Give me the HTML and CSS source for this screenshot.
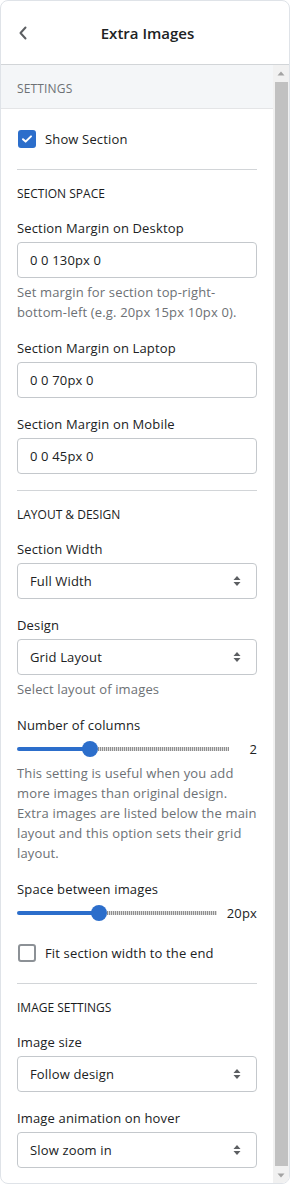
FILE: index.html
```html
<!DOCTYPE html>
<html lang="en">
<head>
    <meta charset="utf-8">
    <title>Extra Images</title>
    <link rel="stylesheet" href="styles.css">
</head>
<body>

<div class="panel">

    <div class="header">
        <a class="back" href="#">
            <svg width="10" height="14" viewBox="0 0 10 14"><path d="M7.5 1.5 L2.5 7 L7.5 12.5" fill="none" stroke="#5c5f62" stroke-width="2" stroke-linecap="round" stroke-linejoin="round"/></svg>
        </a>
        <h1 class="title">Extra Images</h1>
    </div>

    <div class="main">
        <div class="scroll">

            <div class="band">Settings</div>

            <div class="section">
                <label class="check">
                    <span class="box on">
                        <svg width="12" height="10" viewBox="0 0 12 10"><path d="M2 5.2 L4.6 7.6 L10 2.4" fill="none" stroke="#fff" stroke-width="2" stroke-linecap="round" stroke-linejoin="round"/></svg>
                    </span>
                    Show Section
                </label>
            </div>

            <div class="section">
                <h3 class="heading">Section space</h3>

                <div class="field">
                    <div class="label">Section Margin on Desktop</div>
                    <div class="input">0 0 130px 0</div>
                    <div class="help">Set margin for section top-right-bottom-left (e.g. 20px 15px 10px 0).</div>
                </div>

                <div class="field">
                    <div class="label">Section Margin on Laptop</div>
                    <div class="input">0 0 70px 0</div>
                </div>

                <div class="field">
                    <div class="label">Section Margin on Mobile</div>
                    <div class="input">0 0 45px 0</div>
                </div>
            </div>

            <div class="section">
                <h3 class="heading">Layout &amp; Design</h3>

                <div class="field">
                    <div class="label">Section Width</div>
                    <div class="input select">Full Width <svg width="8" height="12" viewBox="0 0 8 12"><path d="M4 1 L7.5 5 H0.5 Z M4 11 L7.5 7 H0.5 Z" fill="#5c5f62"/></svg></div>
                </div>

                <div class="field">
                    <div class="label">Design</div>
                    <div class="input select">Grid Layout <svg width="8" height="12" viewBox="0 0 8 12"><path d="M4 1 L7.5 5 H0.5 Z M4 11 L7.5 7 H0.5 Z" fill="#5c5f62"/></svg></div>
                    <div class="help">Select layout of images</div>
                </div>

                <div class="field">
                    <div class="label">Number of columns</div>
                    <div class="range">
                        <div class="track">
                            <div class="fill" style="--p: 0.3333"></div>
                            <div class="knob"></div>
                            <div class="rest"></div>
                        </div>
                        <div class="value">2</div>
                    </div>
                    <div class="help">This setting is useful when you add more images than original design. Extra images are listed below the main layout and this option sets their grid layout.</div>
                </div>

                <div class="field">
                    <div class="label">Space between images</div>
                    <div class="range">
                        <div class="track">
                            <div class="fill" style="--p: 0.4"></div>
                            <div class="knob"></div>
                            <div class="rest"></div>
                        </div>
                        <div class="value">20px</div>
                    </div>
                </div>

                <div class="field">
                    <label class="check">
                        <span class="box"></span>
                        Fit section width to the end
                    </label>
                </div>
            </div>

            <div class="section last">
                <h3 class="heading">Image settings</h3>

                <div class="field">
                    <div class="label">Image size</div>
                    <div class="input select">Follow design <svg width="8" height="12" viewBox="0 0 8 12"><path d="M4 1 L7.5 5 H0.5 Z M4 11 L7.5 7 H0.5 Z" fill="#5c5f62"/></svg></div>
                </div>

                <div class="field">
                    <div class="label">Image animation on hover</div>
                    <div class="input select">Slow zoom in <svg width="8" height="12" viewBox="0 0 8 12"><path d="M4 1 L7.5 5 H0.5 Z M4 11 L7.5 7 H0.5 Z" fill="#5c5f62"/></svg></div>
                </div>
            </div>

        </div>

        <div class="scrollbar">
            <div class="arrow">
                <svg width="8" height="5" viewBox="0 0 8 5"><path d="M4 0.5 L7.5 4.5 H0.5 Z" fill="#a3a3a3"/></svg>
            </div>
            <div class="thumb"></div>
            <div class="arrow">
                <svg width="8" height="5" viewBox="0 0 8 5"><path d="M4 4.5 L7.5 0.5 H0.5 Z" fill="#a3a3a3"/></svg>
            </div>
        </div>
    </div>

</div>

</body>
</html>
```

FILE: styles.css
```css
* {
    margin: 0;
    padding: 0;
    box-sizing: border-box;
}

body {
    font-family: "Open Sans", "Noto Sans", sans-serif;
    font-size: 13px;
    line-height: 20px;
    letter-spacing: 0.15px;
    color: #202223;
    background: #ffffff;
}

.panel {
    width: 290px;
    height: 1184px;
    border: 1px solid #dfe3e8;
    border-radius: 8px;
    overflow: hidden;
    display: flex;
    flex-direction: column;
    background: #ffffff;
}

.header {
    height: 64px;
    flex: none;
    display: flex;
    align-items: center;
    border-bottom: 1px solid #d2d5d8;
    padding: 0 16px;
}

.back {
    width: 20px;
    height: 20px;
    display: flex;
    align-items: center;
    justify-content: flex-start;
    margin-left: 1px;
}

.title {
    flex: 1;
    text-align: center;
    font-size: 15px;
    font-weight: 600;
    letter-spacing: 0;
    margin-right: 16px;
}

.main {
    flex: 1;
    display: flex;
    min-height: 0;
}

.scroll {
    flex: 1;
    overflow: hidden;
}

.band {
    height: 44px;
    display: flex;
    align-items: center;
    padding: 5px 16px 0;
    background: #f4f6f8;
    border-bottom: 1px solid #e4e5e7;
    font-size: 12px;
    text-transform: uppercase;
    color: #6d7175;
}

.section {
    margin: 0 16px;
    padding: 16px 0;
    border-bottom: 1px solid #d2d5d8;
}

.section.last {
    border-bottom: none;
}

.heading {
    font-size: 12px;
    line-height: 16px;
    font-weight: 400;
    letter-spacing: 0;
    text-transform: uppercase;
    margin-bottom: 16px;
    color: #1a1c1d;
}

.field + .field {
    margin-top: 16px;
}

.label {
    margin-bottom: 4px;
}

.input {
    height: 36px;
    border: 1px solid #c4c8cc;
    border-radius: 4px;
    padding: 0 12px;
    display: flex;
    align-items: center;
    justify-content: space-between;
}

.select svg {
    margin-right: 3px;
}

.help {
    margin-top: 4px;
    color: #6d7175;
}

.check {
    height: 28px;
    display: flex;
    align-items: center;
    gap: 9px;
}

.box {
    width: 18px;
    height: 18px;
    margin-left: 1px;
    border: 2px solid #8c9196;
    border-radius: 3px;
    display: flex;
    align-items: center;
    justify-content: center;
}

.box.on {
    background: #2c6ecb;
    border-color: #2c6ecb;
}

.range {
    height: 20px;
    display: flex;
    align-items: center;
}

.track {
    flex: 1;
    display: flex;
    align-items: center;
}

.fill {
    width: calc(var(--p) * (100% - 16px) + 8px);
    height: 4px;
    background: #2c6ecb;
    border-radius: 2px 0 0 2px;
    flex: none;
    margin-right: -8px;
}

.knob {
    width: 16px;
    height: 16px;
    border-radius: 50%;
    background: #2c6ecb;
    flex: none;
    position: relative;
}

.rest {
    flex: 1;
    height: 4px;
    background: repeating-linear-gradient(90deg, #8f8f8f 0 1px, #dcdcdc 1px 2px);
}

.value {
    min-width: 18px;
    margin-left: 10px;
    text-align: right;
}

.scrollbar {
    width: 16px;
    flex: none;
    background: #f1f1f1;
    display: flex;
    flex-direction: column;
}

.arrow {
    height: 16px;
    flex: none;
    display: flex;
    align-items: center;
    justify-content: center;
}

.thumb {
    flex: 1;
    margin: 1px 1px 1px 2px;
    background: #c1c1c1;
}
```
